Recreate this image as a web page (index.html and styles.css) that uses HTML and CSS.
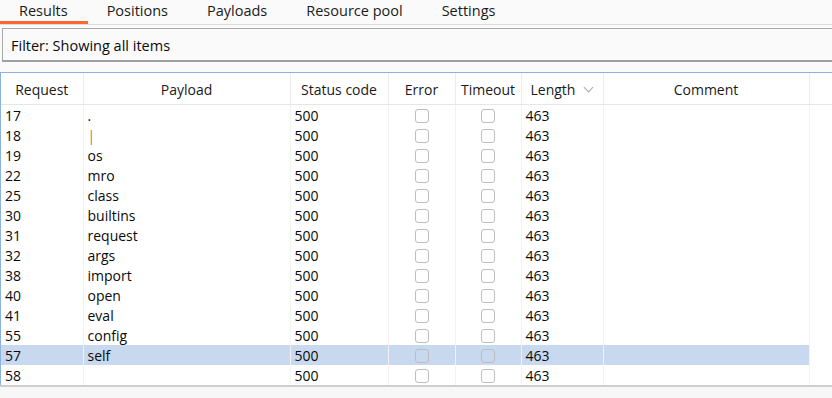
FILE: index.html
```html
<!DOCTYPE html>
<html lang="en">
<head>
    <meta charset="UTF-8">
    <title>Intruder results</title>
    <link rel="stylesheet" href="styles.css">
</head>
<body>
    <div class="tabs">
        <div class="tab active">Results</div>
        <div class="tab">Positions</div>
        <div class="tab">Payloads</div>
        <div class="tab">Resource pool</div>
        <div class="tab">Settings</div>
    </div>

    <div class="filter">Filter: Showing all items</div>

    <div class="results">
        <table>
            <colgroup>
                <col class="c-req">
                <col class="c-payload">
                <col class="c-status">
                <col class="c-error">
                <col class="c-timeout">
                <col class="c-length">
                <col class="c-comment">
                <col>
            </colgroup>
            <thead>
                <tr>
                    <th>Request</th>
                    <th>Payload</th>
                    <th>Status code</th>
                    <th>Error</th>
                    <th>Timeout</th>
                    <th class="sorted">Length <span class="chev"></span></th>
                    <th>Comment</th>
                    <th class="filler"></th>
                </tr>
            </thead>
            <tbody id="rows"></tbody>
        </table>
    </div>
    <div class="bottom"></div>

    <script>
        // request / payload pairs, all came back 500 with length 463
        const data = [
            [17, '.'], [18, '|'], [19, 'os'], [22, 'mro'], [25, 'class'],
            [30, 'builtins'], [31, 'request'], [32, 'args'], [38, 'import'],
            [40, 'open'], [41, 'eval'], [55, 'config'], [57, 'self'], [58, '']
        ];

        let html = '';
        data.forEach(function (row) {
            const sel = row[0] === 57 ? ' class="selected"' : '';
            const payload = row[1] === '|' ? '<span class="pipe">|</span>' : row[1];
            html += `
                <tr${sel}>
                    <td>${row[0]}</td>
                    <td>${payload}</td>
                    <td>500</td>
                    <td class="box"><span class="check"></span></td>
                    <td class="box"><span class="check"></span></td>
                    <td>463</td>
                    <td></td>
                    <td class="filler"></td>
                </tr>`;
        });
        document.getElementById('rows').innerHTML = html;
    </script>
</body>
</html>
```

FILE: styles.css
```css
body {
    margin: 0;
    width: 832px;
    height: 398px;
    overflow: hidden;
    background-color: #fafafa;
    font-family: 'Open Sans', 'Noto Sans', sans-serif;
    font-size: 14px;
    color: #0a0a0a;
}
.tabs {
    display: flex;
    height: 24px;
    border-bottom: 1px solid #dcdcdc;
    font-size: 14.5px;
}
.tab {
    padding: 0 20px 0 19px;
    line-height: 22px;
    color: #1a1a1a;
}
.tab.active {
    padding-left: 19px;
    border-bottom: 3px solid #ff6633;
    height: 21px;
}
.filter {
    margin: 3px 0 0 2px;
    height: 31px;
    line-height: 34px;
    padding-left: 8px;
    font-size: 14.5px;
    border-top: 1px solid #a8a8a8;
    border-left: 1px solid #a8a8a8;
    border-bottom: 2px solid #a0a0a0;
    background-color: #fafafa;
}
.results {
    margin-top: 10px;
    border-top: 1px solid #8cb3e0;
    border-left: 1px solid #8cb3e0;
    background-color: #fff;
}
table {
    width: 100%;
    border-collapse: collapse;
    table-layout: fixed;
}
.c-req { width: 82px; }
.c-payload { width: 207px; }
.c-status { width: 98px; }
.c-error { width: 67px; }
.c-timeout { width: 66px; }
.c-length { width: 82px; }
.c-comment { width: 206px; }
th {
    height: 30px;
    padding: 1px 0 0;
    font-weight: normal;
    color: #1a1a1a;
    text-align: center;
    border-right: 1px solid #ececec;
    border-bottom: 1px solid #e6e6e6;
}
th.sorted {
    text-align: left;
    padding-left: 9px;
}
.chev {
    display: inline-block;
    width: 6px;
    height: 6px;
    border-right: 1px solid #a8a8a8;
    border-bottom: 1px solid #a8a8a8;
    transform: rotate(45deg);
    margin: 0 0 4px 6px;
}
th.filler {
    border-right: none;
}
td {
    height: 19px;
    padding: 1px 0 0 4px;
    line-height: 19px;
    white-space: nowrap;
    border-right: 1px solid #f2f2f2;
}
td.filler {
    border-right: none;
}
tr.selected td {
    background-color: #c8d9ef;
}
tr.selected td.filler {
    background-color: #fff;
}
td.box {
    text-align: center;
    padding: 0;
    height: 20px;
}
.check {
    display: inline-block;
    width: 14px;
    height: 14px;
    box-sizing: border-box;
    border: 1px solid #bdbdbd;
    border-radius: 3px;
    background-color: #fff;
    vertical-align: middle;
    margin-top: -2px;
}
tr.selected .check {
    background-color: #c8d9ef;
}
.pipe {
    color: #c8752a;
}
.bottom {
    border-top: 2px solid #cfcfcf;
    height: 20px;
    background-color: #f7f7f7;
}
```
